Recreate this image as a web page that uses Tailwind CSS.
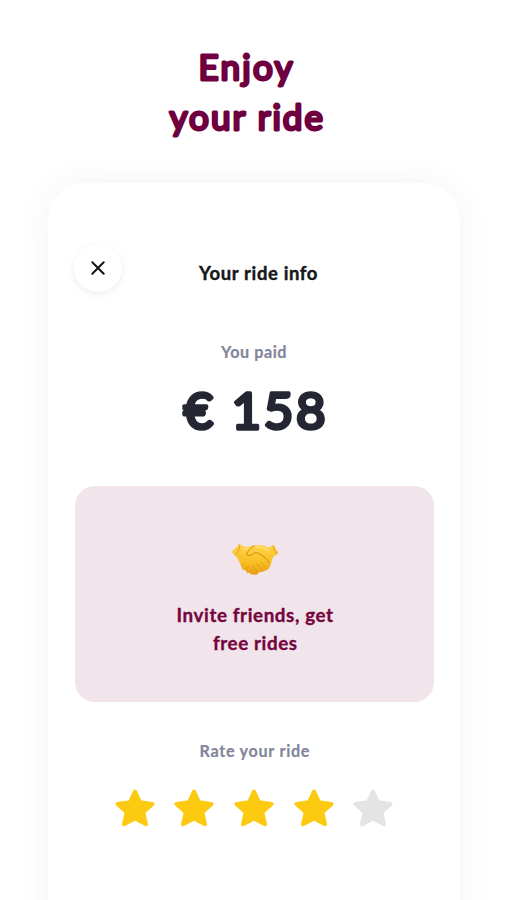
<!DOCTYPE html>
<html lang="en">
<head>
<meta charset="utf-8">
<title>Your ride info</title>
<script src="https://cdn.jsdelivr.net/npm/@tailwindcss/browser@4"></script>
</head>
<body class="bg-white font-['Lato',sans-serif] h-[900px] overflow-hidden">
<h1 class="pt-[42px] ml-[146px] w-[200px] h-[183px]">
  <svg width="200" height="102" class="overflow-visible font-normal text-[35px]" fill="#6f0040" stroke="#6f0040" stroke-width="2.900" stroke-linejoin="round">
    <text x="52.500" y="37.500" textLength="94" lengthAdjust="spacing">Enjoy</text>
    <text x="23.500" y="87.500" textLength="153.500" lengthAdjust="spacing">your ride</text>
  </svg>
</h1>
<main class="ml-12 w-[412px] h-[770px] rounded-t-[36px] bg-white shadow-[0_0_34px_rgba(0,0,0,0.05)] px-[27px] pt-[61px] flex flex-col">
  <header class="grid grid-cols-[48px_1fr_48px] h-12 -ml-px w-[360px]">
    <button class="size-12 rounded-full bg-white shadow-[0_2px_7px_rgba(0,0,0,0.08)] flex items-center justify-center" aria-label="Close">
      <svg width="14" height="14" viewBox="0 0 14 14" stroke="#141414" stroke-width="2" stroke-linecap="round"><path d="M1.300 1.300 12.700 12.700M12.700 1.300 1.300 12.700"/></svg>
    </button>
    <h2 class="mt-[14px] pl-2"><svg width="100%" height="32" class="overflow-visible font-bold text-[18.500px]" fill="#161719" stroke="#161719" stroke-width=".4" stroke-linejoin="round"><text x="69" y="22.400" textLength="118.500" lengthAdjust="spacing">Your ride info</text></svg></h2>
  </header>
  <section class="mt-[48px] h-[146px] pt-1">
    <svg width="358" height="100" class="overflow-visible font-bold">
      <text x="146" y="14" textLength="65.500" lengthAdjust="spacing" class="text-[16.200px]" fill="#83859a" stroke="#83859a" stroke-width=".2" stroke-linejoin="round">You paid</text>
      <text y="84.500" x="108.500" textLength="142" lengthAdjust="spacing" class="text-[51px] font-normal" fill="#242733" stroke="#242733" stroke-width="3.600" stroke-linejoin="round">€ 158</text>
    </svg>
  </section>
  <section class="h-[216px] w-[359px] rounded-[20px] bg-[#f1e4ea] flex flex-col items-center pt-[57px]">
    <svg width="48" height="34" viewBox="0 0 48 34" aria-label="Handshake">
      <defs><linearGradient id="skin" x2="0" y2="1"><stop stop-color="#ffd34b"/><stop offset=".6" stop-color="#f8bd24"/><stop offset="1" stop-color="#e99d10"/></linearGradient></defs>
      <path d="M1.500 8 8 1.500Q9 .8 10.200 1.800L14 4Q18 3.500 23 2.500L31 2 38 4.500 41.500 2Q42.500 1.500 43.500 3L47 9Q47.500 10.500 46 11.300L42 14 39.500 22Q38 27 34 27.500 31 30 28 29 26 33.500 23 31 20 33 18.500 29.500 15 31 15 27 11 28 10.500 23.500L6 14.500 2 10.500Q.7 9.500 1.500 8Z" fill="url(#skin)"/>
      <path d="M23 2.700C19 5 17 8 15.500 11 17 14 21 12 24 9.500Q31 10 38.500 20" fill="none" stroke="#d08d12" stroke-width="1" stroke-linecap="round" stroke-linejoin="round"/>
      <path d="M30 19 35 24M26 21 31 26.500M22 23 26.500 29M11 23 13 20.500M15 27 17.500 23.500M18.500 29.500 21 26.500M22.500 30.500 24 28.500M8 1.500Q10 5 5 12M42 3Q42.500 7 46 11" fill="none" stroke="#d6951a" stroke-width=".7" stroke-linecap="round"/>
      <path d="M25 4Q32 3.500 37.500 7.500M12 6 17 5.500" fill="none" stroke="#ffe178" stroke-width="1.500" stroke-linecap="round"/>
    </svg>
    <svg width="160" height="60" class="overflow-visible mt-[23px] font-bold text-[18.800px]" fill="#75053f" stroke="#75053f" stroke-width=".35" stroke-linejoin="round">
      <text x="1.500" y="22" textLength="156.500" lengthAdjust="spacing">Invite friends, get</text>
      <text x="38" y="49.500" textLength="84" lengthAdjust="spacing">free rides</text>
    </svg>
  </section>
  <section class="pt-[38px] flex flex-col items-center w-[359px]">
    <svg width="110" height="24" class="overflow-visible font-bold text-[16.200px]" fill="#83859a" stroke="#83859a" stroke-width=".2" stroke-linejoin="round"><text x="-.5" y="17" textLength="110" lengthAdjust="spacing">Rate your ride</text></svg>
    <svg width="0" height="0" class="absolute"><symbol id="star" viewBox="0 0 40 38"><path d="M20 2.500 25 13.300 37.500 15 28.300 23.300 31 35.300 20 29.500 9 35.300 11.700 23.300 2.500 15 15 13.300Z" fill="currentColor" stroke="currentColor" stroke-width="4" stroke-linejoin="round"/></symbol></svg>
    <div class="flex gap-[19.600px] mt-[25px] -ml-[1px] text-[#fdca12]">
      <svg width="40" height="38"><use href="#star"/></svg>
      <svg width="40" height="38"><use href="#star"/></svg>
      <svg width="40" height="38"><use href="#star"/></svg>
      <svg width="40" height="38"><use href="#star"/></svg>
      <svg width="40" height="38" class="text-[#e4e4e4]"><use href="#star"/></svg>
    </div>
  </section>
</main>
</body>
</html>
